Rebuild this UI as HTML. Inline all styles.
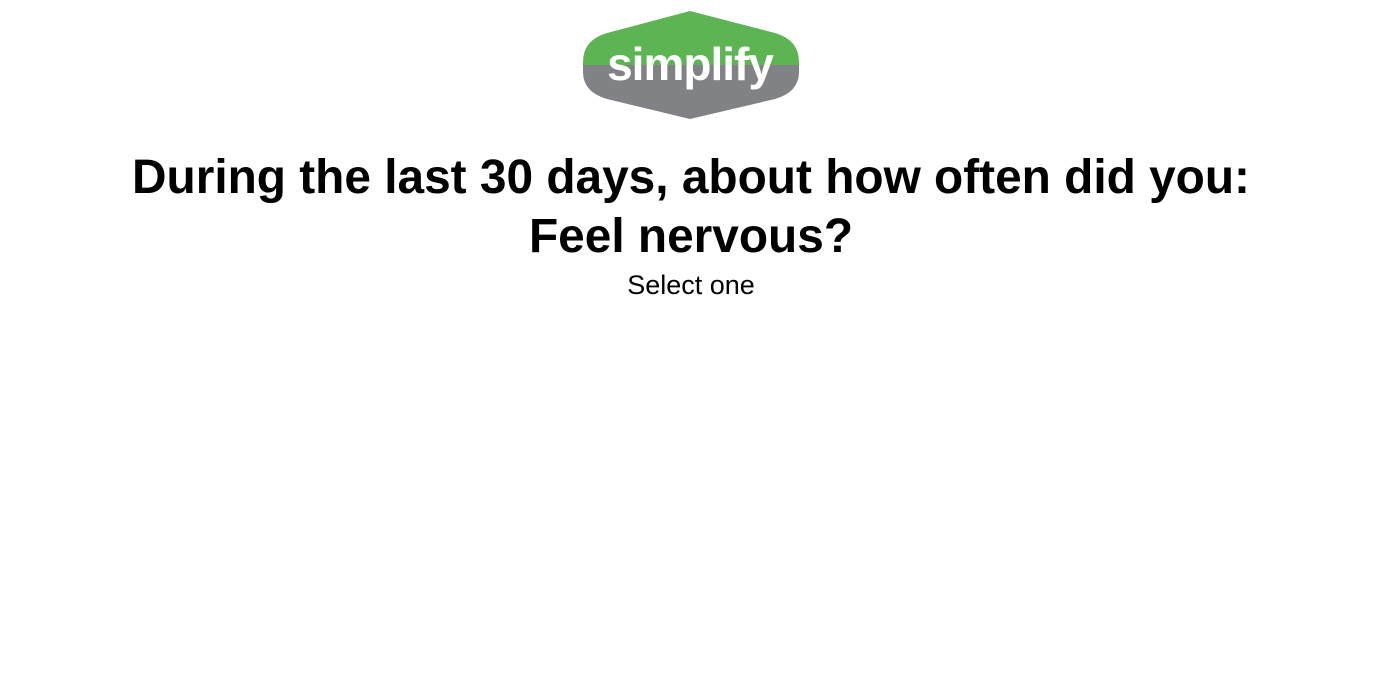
<!DOCTYPE html>
<html><head><meta charset="utf-8"><style>
html,body{margin:0;padding:0;background:#fff;width:1382px;height:683px;overflow:hidden;font-family:"Liberation Sans",Arial,sans-serif;}
.logo{position:absolute;left:580px;top:8px;}
h1{position:absolute;left:0;width:1382px;top:148px;margin:0;text-align:center;font-size:47.8px;font-weight:bold;line-height:59px;color:#000;}
.sel{position:absolute;left:0;width:1382px;top:270px;text-align:center;font-size:27px;color:#000;}
</style></head><body>
<svg class="logo" width="222" height="114" viewBox="580 8 222 114">
<defs><clipPath id="c"><path d="M690,11 L775,33 Q799,40 799,62 L799,72 Q799,92 775,99 L690,119 L607,99 Q583,92 583,72 L583,62 Q583,40 607,33 Z"/></clipPath></defs>
<g clip-path="url(#c)">
<rect x="580" y="8" width="222" height="57" fill="#5cb552"/>
<rect x="580" y="65" width="222" height="60" fill="#818285"/>
</g>
<text x="690" y="80" text-anchor="middle" font-family="Liberation Sans, sans-serif" font-weight="600" font-size="46" fill="#fff" letter-spacing="-1">simplify</text>
</svg>
<h1>During the last 30 days, about how often did you:<br>Feel nervous?</h1>
<div class="sel">Select one</div>
</body></html>
